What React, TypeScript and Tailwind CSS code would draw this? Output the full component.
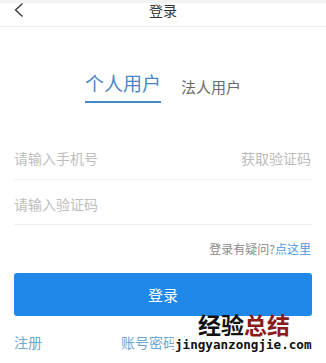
import React from "react";

export default function App() {
  const font = { fontFamily: '"Noto Sans CJK SC", "Noto Sans", sans-serif' };
  return (
    <div
      className="relative w-[326px] h-[363px] overflow-hidden bg-white"
      style={font}
    >
      <div className="h-[3px] bg-[#f3f3f3]" />
      <div className="h-[24px] border-b border-[#ededed] grid grid-cols-[1fr_auto_1fr] items-start">
        <div className="pl-[14px]">
          <svg width="10" height="14" viewBox="0 0 10 14" className="block">
            <path d="M8.5 0.5 L1.5 7 L8.5 13.5" fill="none" stroke="#333" strokeWidth="1.3" />
          </svg>
        </div>
        <div className="text-[14px] leading-[14px] text-[#333]">登录</div>
        <div />
      </div>

      <div className="mt-[46px] flex justify-center items-start gap-[20px]">
        <div className="text-[19px] leading-[20px] text-[#4a87c9] pb-[8px] border-b-2 border-[#4a87c9]">
          个人用户
        </div>
        <div className="mt-[6px] text-[15px] leading-[15px] text-[#6a6a6a]">法人用户</div>
      </div>

      <div className="mx-[14px] h-[77px] flex items-end justify-between pb-[14px] border-b border-[#f0f0f0] text-[14px] leading-[14px]">
        <span className="text-[#bdbdbd]">请输入手机号</span>
        <span className="text-[#bbbbbb] mr-[1px]">获取验证码</span>
      </div>
      <div className="mx-[14px] h-[45px] flex items-end pb-[13px] border-b border-[#f0f0f0] text-[14px] leading-[14px]">
        <span className="text-[#bdbdbd]">请输入验证码</span>
      </div>

      <div className="mt-[18px] mr-[15px] text-right text-[12px] leading-[12px]">
        <span className="text-[#8a8a8a]">登录有疑问?</span>
        <span className="text-[#4a9be0]">点这里</span>
      </div>

      <button className="mt-[18px] mx-[14px] w-[298px] h-[43px] rounded-[3px] bg-[#2088e8] text-white text-[15px] leading-[15px] flex items-center justify-center">
        登录
      </button>

      <div className="mt-[19px] mx-[14px] grid grid-cols-3 text-[14px] leading-[14px] text-[#6ea6d2]">
        <span>注册</span>
        <span className="text-center">账号密码登录</span>
        <span />
      </div>

      <div className="absolute left-[198px] top-[312px] text-[23px] leading-[24px] font-bold">
        <span className="text-[#111]">经验</span>
        <span className="text-[#8b1c1c]">总结</span>
      </div>
      <div
        className="absolute left-[174px] top-[337px] bg-white px-[1px] text-[12.6px] leading-[16px] font-bold text-[#111]"
        style={{ fontFamily: '"DejaVu Sans Mono", monospace' }}
      >
        jingyanzongjie.com
      </div>
    </div>
  );
}
